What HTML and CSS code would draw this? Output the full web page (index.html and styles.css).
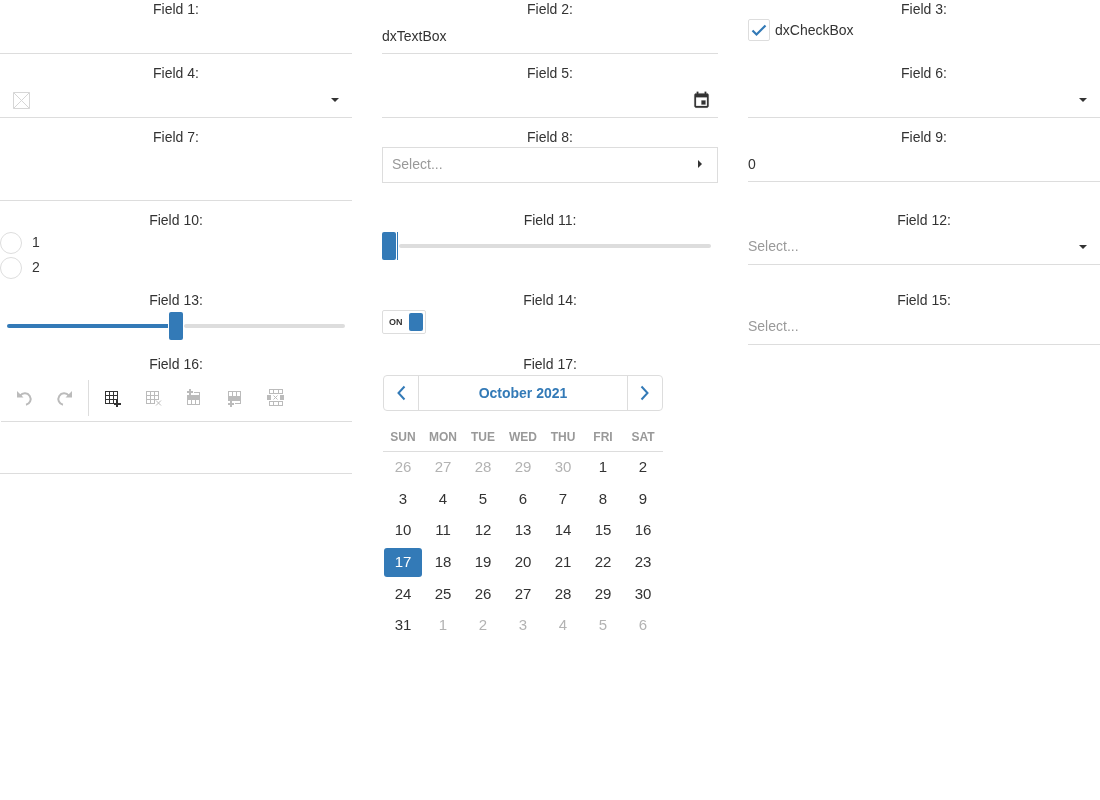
FILE: index.html
```html
<!DOCTYPE html>
<html lang="en">
<head>
    <meta charset="UTF-8">
    <title>Form</title>
    <link rel="stylesheet" href="styles.css">
</head>
<body>
<div class="form">

    <div class="field">
        <div class="label">Field 1:</div>
        <div class="box"></div>
    </div>
    <div class="field">
        <div class="label">Field 2:</div>
        <div class="box box-text">dxTextBox</div>
    </div>
    <div class="field">
        <div class="label">Field 3:</div>
        <div class="check-row">
            <span class="check">
                <svg width="20" height="20" viewBox="0 0 20 20"><path d="M3.5 10.5l4 4 9-9" fill="none" stroke="#337ab7" stroke-width="2.2"/></svg>
            </span>
            dxCheckBox
        </div>
    </div>

    <div class="field">
        <div class="label">Field 4:</div>
        <div class="box box-image">
            <svg class="image-icon" width="17" height="17" viewBox="0 0 17 17"><path d="M.5.5h16v16H.5z" fill="none" stroke="#d6d6d6"/><path d="M.5.5l16 16M16.500.5l-16 16" fill="none" stroke="#d6d6d6"/></svg>
            <span class="caret"></span>
        </div>
    </div>
    <div class="field">
        <div class="label">Field 5:</div>
        <div class="box box-date">
            <svg class="date-icon" width="19" height="19" viewBox="0 0 24 24"><path fill="#333" stroke="#333" stroke-width=".3" d="M17 12h-5v5h5v-5zM16 1v2H8V1H6v2H5c-1.11 0-1.99.9-1.99 2L3 19c0 1.1.89 2 2 2h14c1.1 0 2-.9 2-2V5c0-1.1-.9-2-2-2h-1V1h-2zm3 18H5V8h14v11z"/></svg>
        </div>
    </div>
    <div class="field">
        <div class="label">Field 6:</div>
        <div class="box box-select"><span></span><span class="caret"></span></div>
    </div>

    <div class="field">
        <div class="label">Field 7:</div>
        <div class="box box-tall"></div>
    </div>
    <div class="field">
        <div class="label">Field 8:</div>
        <div class="outlined">
            <span class="placeholder">Select...</span>
            <span class="arrow-right"></span>
        </div>
    </div>
    <div class="field">
        <div class="label">Field 9:</div>
        <div class="box box-text">0</div>
    </div>

    <div class="field">
        <div class="label">Field 10:</div>
        <div class="radios">
            <div class="radio-row"><span class="radio"></span>1</div>
            <div class="radio-row"><span class="radio"></span>2</div>
        </div>
    </div>
    <div class="field">
        <div class="label">Field 11:</div>
        <div class="slider slider-start">
            <span class="thumb"></span>
            <span class="thumb-edge"></span>
            <span class="track"></span>
        </div>
    </div>
    <div class="field">
        <div class="label">Field 12:</div>
        <div class="box box-select"><span class="placeholder">Select...</span><span class="caret"></span></div>
    </div>

    <div class="field">
        <div class="label">Field 13:</div>
        <div class="slider slider-middle">
            <span class="fill"></span>
            <span class="thumb"></span>
            <span class="track"></span>
        </div>
    </div>
    <div class="field">
        <div class="label">Field 14:</div>
        <div class="switch">
            <span class="switch-text">ON</span>
            <span class="switch-thumb"></span>
        </div>
    </div>
    <div class="field">
        <div class="label">Field 15:</div>
        <div class="box"><span class="placeholder">Select...</span></div>
    </div>

    <div class="field">
        <div class="label">Field 16:</div>
        <div class="toolbar">
            <!-- undo -->
            <span class="tool">
                <svg width="18" height="18" viewBox="0 1 18 18"><path d="M1 2v6.500h6.500z" fill="#bbb"/><path d="M4.200 6.600A5.800 5.800 0 1 1 10 15.800" fill="none" stroke="#bbb" stroke-width="2"/></svg>
            </span>
            <!-- redo -->
            <span class="tool">
                <svg width="18" height="18" viewBox="2 1 18 18"><g transform="matrix(-1 0 0 1 18 0)"><path d="M1 2v6.500h6.500z" fill="#bbb"/><path d="M4.200 6.600A5.800 5.800 0 1 1 10 15.800" fill="none" stroke="#bbb" stroke-width="2"/></g></svg>
            </span>
            <span class="tool-sep"></span>
            <!-- insert table -->
            <span class="tool">
                <svg class="crisp" width="18" height="18" viewBox="0 0 18 18"><path d="M1.500 1.500h12v12h-12zM5.500 1.500v12M9.500 1.500v12M1.500 5.500h12M1.500 9.500h12" fill="none" stroke="#333"/><path d="M9.500 10h7.500v7H9.500z" fill="#fff"/><path d="M12 10h2v2.500h3v2h-3V17h-2v-2.500H9.500v-2H12z" fill="#333"/></svg>
            </span>
            <!-- delete table -->
            <span class="tool">
                <svg class="crisp" width="18" height="18" viewBox="0 0 18 18"><path d="M1.500 1.500h12v8h-4v4h-8zM5.500 1.500v12M9.500 1.500v8M1.500 5.500h12M1.500 9.500h8" fill="none" stroke="#bbb"/><path d="M11 10.500l5 5M16 10.500l-5 5" fill="none" stroke="#bbb" shape-rendering="auto"/></svg>
            </span>
            <!-- row above -->
            <span class="tool">
                <svg class="crisp" width="18" height="18" viewBox="0 2 18 18"><path d="M3 1h2v2h2v2H5v2H3V5H1V3h2z" fill="#bbb"/><path d="M7.500 4.500h6V7" fill="none" stroke="#bbb"/><path d="M1 7h13v5H1z" fill="#bbb"/><path d="M1.500 12v4.500h12V12M5.500 12v4.500M9.500 12v4.500" fill="none" stroke="#bbb"/></svg>
            </span>
            <!-- row below -->
            <span class="tool">
                <svg class="crisp" width="18" height="18" viewBox="0 0 18 18"><path d="M1.500 6V1.500h12V6M5.500 1.500V6M9.500 1.500V6" fill="none" stroke="#bbb"/><path d="M1 6h13v5H1z" fill="#bbb"/><path d="M7.500 13.500h6V11" fill="none" stroke="#bbb"/><path d="M3 11h2v2h2v2H5v2H3v-2H1v-2h2z" fill="#bbb"/></svg>
            </span>
            <!-- delete row -->
            <span class="tool">
                <svg class="crisp" width="18" height="18" viewBox="2 2 18 18"><path d="M3.500 1.500h13v4h-13zM7.500 1.500v4M12.500 1.500v4M3.500 13.500h13v4h-13zM7.500 13.500v4M12.500 13.500v4" fill="none" stroke="#bbb"/><path d="M1 7h4v5H1zM14 7h4v5h-4z" fill="#bbb"/><path d="M7.500 7.500l4 4M11.500 7.500l-4 4" fill="none" stroke="#bbb" shape-rendering="auto"/></svg>
            </span>
        </div>
        <div class="editor"></div>
    </div>
    <div class="field">
        <div class="label">Field 17:</div>
        <div class="calendar">
            <div class="cal-nav">
                <span class="cal-btn">
                    <svg width="10" height="16" viewBox="0 0 10 16"><path d="M8.500 1.500L2.500 8l6 6.500" fill="none" stroke="#337ab7" stroke-width="2"/></svg>
                </span>
                <span class="cal-title">October 2021</span>
                <span class="cal-btn cal-btn-next">
                    <svg width="10" height="16" viewBox="0 0 10 16"><path d="M1.500 1.500L7.500 8l-6 6.500" fill="none" stroke="#337ab7" stroke-width="2"/></svg>
                </span>
            </div>
            <div class="cal-head">
                <span>SUN</span><span>MON</span><span>TUE</span><span>WED</span><span>THU</span><span>FRI</span><span>SAT</span>
            </div>
            <div class="cal-days">
                <span class="other">26</span><span class="other">27</span><span class="other">28</span><span class="other">29</span><span class="other">30</span><span>1</span><span>2</span>
                <span>3</span><span>4</span><span>5</span><span>6</span><span>7</span><span>8</span><span>9</span>
                <span>10</span><span>11</span><span>12</span><span>13</span><span>14</span><span>15</span><span>16</span>
                <span class="selected">17</span><span>18</span><span>19</span><span>20</span><span>21</span><span>22</span><span>23</span>
                <span>24</span><span>25</span><span>26</span><span>27</span><span>28</span><span>29</span><span>30</span>
                <span>31</span><span class="other">1</span><span class="other">2</span><span class="other">3</span><span class="other">4</span><span class="other">5</span><span class="other">6</span>
            </div>
        </div>
    </div>

</div>
</body>
</html>
```

FILE: styles.css
```css
body {
    margin: 0;
    background-color: #fff;
    color: #333;
    font-family: "Liberation Sans", Arial, sans-serif;
    font-size: 14px;
}

/* Form grid */
.form {
    display: grid;
    grid-template-columns: 352px 336px 352px;
    grid-template-rows: 64px 64px 83px 80px 64px auto;
    column-gap: 30px;
    will-change: transform; /* grey text smoothing */
}

.label {
    height: 17px;
    line-height: 19px;
    text-align: center;
}

/* Text boxes and selects */
.box {
    display: flex;
    align-items: center;
    box-sizing: border-box;
    height: 37px;
    border-bottom: 1px solid #ddd;
}

.box-text {
    padding-top: 2px;
}

.box-tall {
    height: 56px;
}

.box-image {
    justify-content: space-between;
    padding: 0 13px 0 13px;
}

.image-icon {
    margin-top: 2px;
}

.box-date {
    justify-content: flex-end;
    padding-right: 7.5px;
}

.date-icon {
    margin-top: 3px;
}

.box-select {
    justify-content: space-between;
    padding-right: 13px;
}

.placeholder {
    color: #999;
}

.caret {
    width: 0;
    height: 0;
    margin-top: 1px;
    border-top: 4px solid #333;
    border-left: 4px solid transparent;
    border-right: 4px solid transparent;
}

.outlined {
    display: flex;
    align-items: center;
    justify-content: space-between;
    box-sizing: border-box;
    height: 36px;
    margin-top: 2px;
    padding: 0 15px 2px 9px;
    border: 1px solid #ddd;
}

.arrow-right {
    width: 0;
    height: 0;
    border-left: 4px solid #333;
    border-top: 4px solid transparent;
    border-bottom: 4px solid transparent;
}

/* Checkbox */
.check-row {
    display: flex;
    align-items: center;
    gap: 5px;
    margin-top: 2px;
}

.check {
    display: block;
    width: 20px;
    height: 20px;
    border: 1px solid #ddd;
    border-radius: 2px;
}

.check svg {
    display: block;
}

/* Radio group */
.radios {
    margin-top: 4px;
}

.radio-row {
    display: flex;
    gap: 10px;
    height: 25px;
    line-height: 20px;
}

.radio {
    box-sizing: border-box;
    width: 22px;
    height: 22px;
    border: 1px solid #ddd;
    border-radius: 50%;
}

/* Sliders */
.slider {
    display: flex;
    align-items: center;
    gap: 1px;
    height: 28px;
    margin-top: 4px;
}

.slider-start {
    padding-right: 7px;
}

.slider-middle {
    padding: 0 7px;
}

.thumb {
    width: 14px;
    height: 28px;
    background-color: #337ab7;
    border-radius: 2px;
}

.thumb-edge {
    width: 1px;
    height: 28px;
    background-color: #337ab7;
}

.track {
    flex: 1;
    height: 4px;
    background-color: #ddd;
    border-radius: 2px;
}

.fill {
    width: 161px;
    height: 4px;
    background-color: #337ab7;
    border-radius: 2px 0 0 2px;
}

/* Switch */
.switch {
    display: flex;
    align-items: center;
    justify-content: space-between;
    box-sizing: border-box;
    width: 44px;
    height: 24px;
    margin-top: 2px;
    padding: 0 2px 0 6px;
    border: 1px solid #ddd;
    border-radius: 2px;
}

.switch-text {
    font-size: 9px;
    font-weight: bold;
}

.switch-thumb {
    width: 14px;
    height: 18px;
    background-color: #337ab7;
    border-radius: 2px;
}

/* Html editor toolbar */
.toolbar {
    display: flex;
    align-items: center;
    gap: 1px;
    height: 36px;
    margin-left: 1px;
    padding: 8px 0 5px 4px;
    border-bottom: 1px solid #ddd;
}

.tool {
    display: flex;
    justify-content: center;
    width: 40px;
}

.tool svg {
    margin-top: 2px;
    overflow: visible;
}

.tool-sep {
    width: 1px;
    height: 36px;
    margin: 0 3px 0 1px;
    background-color: #ddd;
}

.crisp {
    shape-rendering: crispEdges;
}

.editor {
    box-sizing: border-box;
    height: 52px;
    border-bottom: 1px solid #ddd;
}

/* Calendar */
.calendar {
    width: 280px;
    margin: 3px 0 0 1px;
}

.cal-nav {
    display: flex;
    align-items: center;
    box-sizing: border-box;
    height: 36px;
    border: 1px solid #ddd;
    border-radius: 4px;
}

.cal-btn {
    display: flex;
    align-items: center;
    justify-content: center;
    box-sizing: border-box;
    width: 35px;
    height: 34px;
    border-right: 1px solid #ddd;
}

.cal-btn-next {
    border-right: none;
    border-left: 1px solid #ddd;
}

.cal-title {
    flex: 1;
    text-align: center;
    font-weight: bold;
    color: #337ab7;
}

.cal-head {
    display: grid;
    grid-template-columns: repeat(7, 40px);
    align-items: center;
    height: 28px;
    margin-top: 12px;
    border-bottom: 1px solid #ddd;
    font-size: 12px;
    font-weight: bold;
    color: #999;
    text-align: center;
}

.cal-days {
    display: grid;
    grid-template-columns: repeat(7, 40px);
    grid-auto-rows: 31.67px;
    font-size: 15px;
    text-align: center;
    line-height: 29px;
}

.other {
    color: #b3b3b3;
}

.selected {
    height: 29px;
    margin: 1px;
    line-height: 27px;
    color: #fff;
    background-color: #337ab7;
    border-radius: 3px;
}
```
